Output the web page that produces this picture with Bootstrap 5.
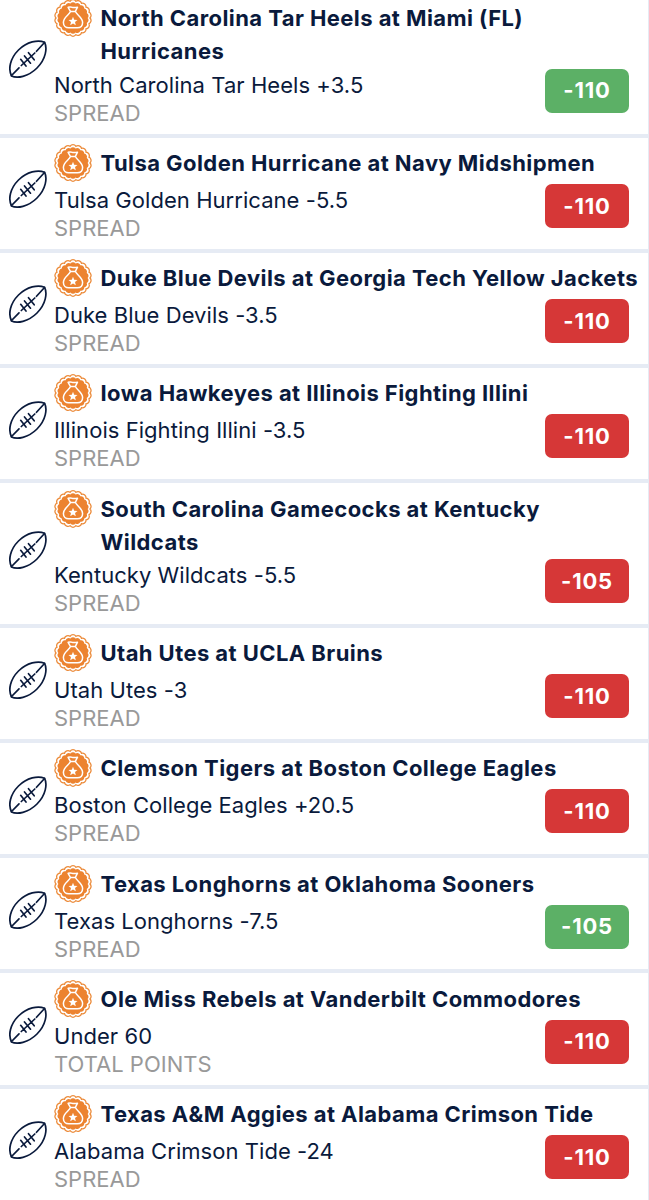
<!DOCTYPE html>
<html lang="en">
<head>
<meta charset="utf-8">
<meta name="viewport" content="width=device-width, initial-scale=1">
<title>Bet history</title>
<link href="https://cdn.jsdelivr.net/npm/bootstrap@5.3.0/dist/css/bootstrap.min.css" rel="stylesheet">
<style>
body{font-family:Inter,"Liberation Sans",sans-serif;color:#0a1a3c;background:#fff;overflow:hidden;height:1200px}
.bets{margin-top:-7.2px;border-right:1px solid #e6eaf3}
.bet{border-bottom:4px solid #e6ebf4;padding:8.5px 0 6.7px 9px}
.ball{width:38px;height:38px;margin-bottom:9.5px;margin-right:7px}
.medal{width:38px;height:38px;margin-top:-2px;margin-left:-.5px;margin-right:9px}
.game{font-size:22px;font-weight:700;line-height:33px;min-height:40px;padding-bottom:2.5px;letter-spacing:.43px}
.game span{padding-top:1px}
.pick{font-size:22px;line-height:28px;letter-spacing:.05px}
.market{font-size:22px;line-height:28px;color:#999}
.odds{width:84px;height:44px;border-radius:7px;font-size:22px;font-weight:700;margin:-2px 19px 0 0;letter-spacing:.8px;color:#fff}
.won{background:#5cb066}
.lost{background:#d63737}
</style>
</head>
<body>
<svg width="0" height="0" class="d-none">
<symbol id="ball" viewBox="0 0 38 38"><g fill="none" stroke="#0a1a3c" stroke-width="1.7" stroke-linecap="round" stroke-linejoin="round"><path d="M2.500 36C-1 29 1 18.500 9.500 10S29-.5 35.500 2.200C38.500 8 37 19 28 28S8 38.500 2.500 36Z"/><path d="M2.500 35.500 10 27.800M12.300 25.500 25.800 13M27.500 11.300 35.500 2.500M11.700 19.300 17 26M15.500 16 21.500 23.200M19.500 12.700 25.200 19.800"/></g></symbol>
<symbol id="medal" viewBox="-19 -19 38 38">
<path fill="#fff" stroke="#ec8c3c" stroke-width="1.300" d="M17 0A3.600 3.600 0 0 1 15.970 5.810A3.600 3.600 0 0 1 13.020 10.930A3.600 3.600 0 0 1 8.500 14.720A3.600 3.600 0 0 1 2.950 16.740A3.600 3.600 0 0 1 -2.950 16.740A3.600 3.600 0 0 1 -8.500 14.720A3.600 3.600 0 0 1 -13.020 10.930A3.600 3.600 0 0 1 -15.970 5.810A3.600 3.600 0 0 1 -17 0A3.600 3.600 0 0 1 -15.970 -5.810A3.600 3.600 0 0 1 -13.020 -10.930A3.600 3.600 0 0 1 -8.500 -14.720A3.600 3.600 0 0 1 -2.950 -16.740A3.600 3.600 0 0 1 2.950 -16.740A3.600 3.600 0 0 1 8.500 -14.720A3.600 3.600 0 0 1 13.020 -10.930A3.600 3.600 0 0 1 15.970 -5.810A3.600 3.600 0 0 1 17 0Z"/>
<path fill="#ec8330" transform="scale(.86)" d="M17 0A3.600 3.600 0 0 1 15.970 5.810A3.600 3.600 0 0 1 13.020 10.930A3.600 3.600 0 0 1 8.500 14.720A3.600 3.600 0 0 1 2.950 16.740A3.600 3.600 0 0 1 -2.950 16.740A3.600 3.600 0 0 1 -8.500 14.720A3.600 3.600 0 0 1 -13.020 10.930A3.600 3.600 0 0 1 -15.970 5.810A3.600 3.600 0 0 1 -17 0A3.600 3.600 0 0 1 -15.970 -5.810A3.600 3.600 0 0 1 -13.020 -10.930A3.600 3.600 0 0 1 -8.500 -14.720A3.600 3.600 0 0 1 -2.950 -16.740A3.600 3.600 0 0 1 2.950 -16.740A3.600 3.600 0 0 1 8.500 -14.720A3.600 3.600 0 0 1 13.020 -10.930A3.600 3.600 0 0 1 15.970 -5.810A3.600 3.600 0 0 1 17 0Z"/>
<path fill="none" stroke="#fff" stroke-width="1.500" stroke-linejoin="round" d="M-2.600-6.600-4.900-10.700Q-2.500-11.500-.5-10.600 1.500-10.100 4.500-10.800L2.400-6.600M-3.500-6.600H3.300M-2.600-6.200C-4-3-9.600-.5-9.600 4.500-9.600 8-7.300 9.800-4.200 9.800H4.200C7.300 9.800 9.600 8 9.600 4.500 9.600-.5 4-3 2.500-6.200"/>
<path fill="#fff" d="M0-1.300 1.200 1.800 4.500 2 2 4.100 2.800 7.300 0 5.500-2.800 7.300-2 4.100-4.500 2-1.200 1.800Z"/></symbol>
</svg>
<main class="bets">
<article class="bet d-flex align-items-center"><svg class="ball flex-shrink-0"><use href="#ball"/></svg><div class="flex-grow-1"><div class="game d-flex text-nowrap"><svg class="medal flex-shrink-0"><use href="#medal"/></svg><span>North Carolina Tar Heels at Miami (FL)<br>Hurricanes</span></div><div class="d-flex justify-content-between align-items-start"><div><div class="pick">North Carolina Tar Heels +3.5</div><div class="market">SPREAD</div></div><div class="odds won d-flex align-items-center justify-content-center">-110</div></div></div></article>
<article class="bet d-flex align-items-center"><svg class="ball flex-shrink-0"><use href="#ball"/></svg><div class="flex-grow-1"><div class="game d-flex text-nowrap"><svg class="medal flex-shrink-0"><use href="#medal"/></svg><span>Tulsa Golden Hurricane at Navy Midshipmen</span></div><div class="d-flex justify-content-between align-items-start"><div><div class="pick">Tulsa Golden Hurricane -5.5</div><div class="market">SPREAD</div></div><div class="odds lost d-flex align-items-center justify-content-center">-110</div></div></div></article>
<article class="bet d-flex align-items-center"><svg class="ball flex-shrink-0"><use href="#ball"/></svg><div class="flex-grow-1"><div class="game d-flex text-nowrap"><svg class="medal flex-shrink-0"><use href="#medal"/></svg><span>Duke Blue Devils at Georgia Tech Yellow Jackets</span></div><div class="d-flex justify-content-between align-items-start"><div><div class="pick">Duke Blue Devils -3.5</div><div class="market">SPREAD</div></div><div class="odds lost d-flex align-items-center justify-content-center">-110</div></div></div></article>
<article class="bet d-flex align-items-center"><svg class="ball flex-shrink-0"><use href="#ball"/></svg><div class="flex-grow-1"><div class="game d-flex text-nowrap"><svg class="medal flex-shrink-0"><use href="#medal"/></svg><span>Iowa Hawkeyes at Illinois Fighting Illini</span></div><div class="d-flex justify-content-between align-items-start"><div><div class="pick">Illinois Fighting Illini -3.5</div><div class="market">SPREAD</div></div><div class="odds lost d-flex align-items-center justify-content-center">-110</div></div></div></article>
<article class="bet d-flex align-items-center"><svg class="ball flex-shrink-0"><use href="#ball"/></svg><div class="flex-grow-1"><div class="game d-flex text-nowrap"><svg class="medal flex-shrink-0"><use href="#medal"/></svg><span>South Carolina Gamecocks at Kentucky<br>Wildcats</span></div><div class="d-flex justify-content-between align-items-start"><div><div class="pick">Kentucky Wildcats -5.5</div><div class="market">SPREAD</div></div><div class="odds lost d-flex align-items-center justify-content-center">-105</div></div></div></article>
<article class="bet d-flex align-items-center"><svg class="ball flex-shrink-0"><use href="#ball"/></svg><div class="flex-grow-1"><div class="game d-flex text-nowrap"><svg class="medal flex-shrink-0"><use href="#medal"/></svg><span>Utah Utes at UCLA Bruins</span></div><div class="d-flex justify-content-between align-items-start"><div><div class="pick">Utah Utes -3</div><div class="market">SPREAD</div></div><div class="odds lost d-flex align-items-center justify-content-center">-110</div></div></div></article>
<article class="bet d-flex align-items-center"><svg class="ball flex-shrink-0"><use href="#ball"/></svg><div class="flex-grow-1"><div class="game d-flex text-nowrap"><svg class="medal flex-shrink-0"><use href="#medal"/></svg><span>Clemson Tigers at Boston College Eagles</span></div><div class="d-flex justify-content-between align-items-start"><div><div class="pick">Boston College Eagles +20.5</div><div class="market">SPREAD</div></div><div class="odds lost d-flex align-items-center justify-content-center">-110</div></div></div></article>
<article class="bet d-flex align-items-center"><svg class="ball flex-shrink-0"><use href="#ball"/></svg><div class="flex-grow-1"><div class="game d-flex text-nowrap"><svg class="medal flex-shrink-0"><use href="#medal"/></svg><span>Texas Longhorns at Oklahoma Sooners</span></div><div class="d-flex justify-content-between align-items-start"><div><div class="pick">Texas Longhorns -7.5</div><div class="market">SPREAD</div></div><div class="odds won d-flex align-items-center justify-content-center">-105</div></div></div></article>
<article class="bet d-flex align-items-center"><svg class="ball flex-shrink-0"><use href="#ball"/></svg><div class="flex-grow-1"><div class="game d-flex text-nowrap"><svg class="medal flex-shrink-0"><use href="#medal"/></svg><span>Ole Miss Rebels at Vanderbilt Commodores</span></div><div class="d-flex justify-content-between align-items-start"><div><div class="pick">Under 60</div><div class="market">TOTAL POINTS</div></div><div class="odds lost d-flex align-items-center justify-content-center">-110</div></div></div></article>
<article class="bet d-flex align-items-center"><svg class="ball flex-shrink-0"><use href="#ball"/></svg><div class="flex-grow-1"><div class="game d-flex text-nowrap"><svg class="medal flex-shrink-0"><use href="#medal"/></svg><span>Texas A&amp;M Aggies at Alabama Crimson Tide</span></div><div class="d-flex justify-content-between align-items-start"><div><div class="pick">Alabama Crimson Tide -24</div><div class="market">SPREAD</div></div><div class="odds lost d-flex align-items-center justify-content-center">-110</div></div></div></article>
</main>
<script src="https://cdn.jsdelivr.net/npm/bootstrap@5.3.0/dist/js/bootstrap.bundle.min.js"></script>
</body>
</html>
